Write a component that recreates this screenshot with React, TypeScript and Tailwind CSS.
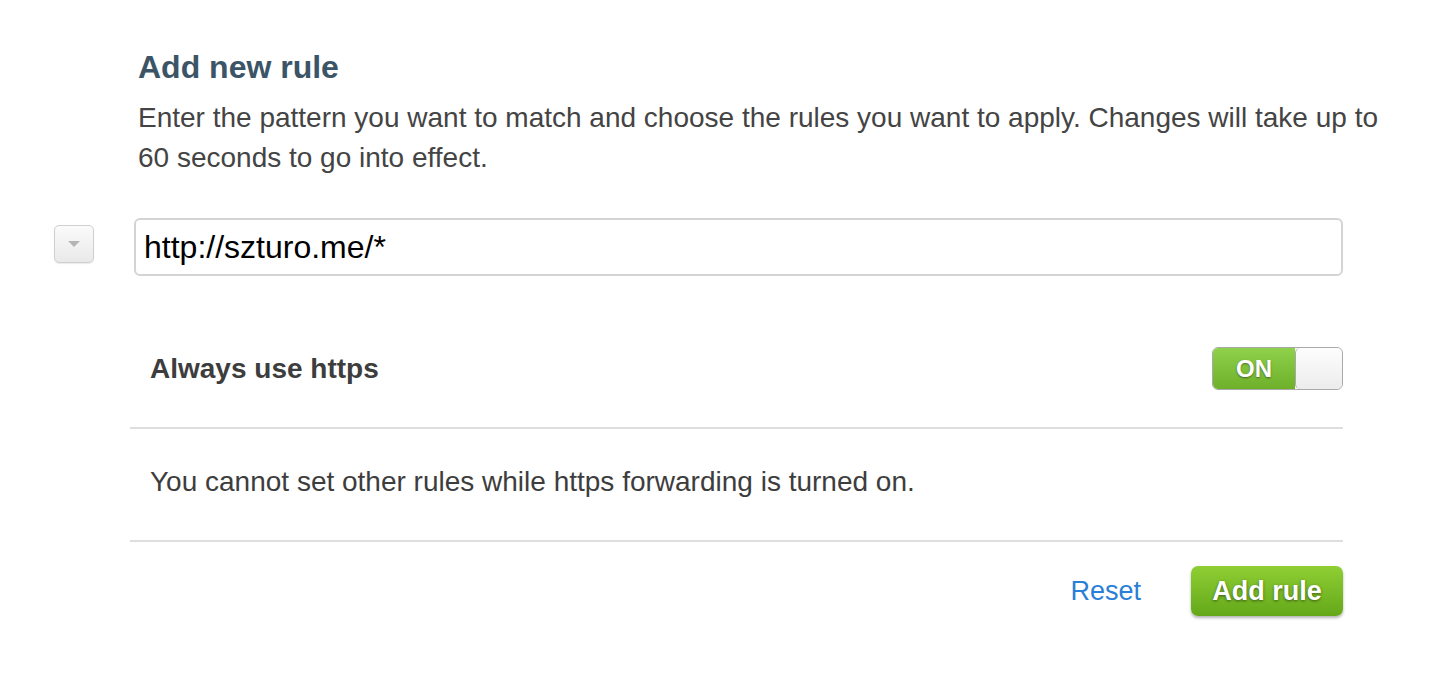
import { useState } from 'react';

function Toggle({ on, onChange }: { on: boolean; onChange: (v: boolean) => void }) {
  return (
    <button
      type="button"
      onClick={() => onChange(!on)}
      className="flex h-[43px] w-[131px] overflow-hidden rounded-[6px] border border-[#a9a9a9]"
    >
      <span className="flex h-full w-[82px] items-center justify-center bg-gradient-to-b from-[#8fd14a] to-[#6fb02a] text-[24px] font-bold text-white [text-shadow:0_1px_2px_rgba(0,0,0,0.45)]">
        {on ? 'ON' : 'OFF'}
      </span>
      <span className="h-full flex-1 rounded-[5px] border-l border-[#a9a9a9] bg-gradient-to-b from-[#fdfdfd] to-[#ececec]" />
    </button>
  );
}

export default function App() {
  const [pattern, setPattern] = useState('http://szturo.me/*');
  const [https, setHttps] = useState(true);

  return (
    <div className="min-h-[676px] w-[1448px] bg-white font-['Liberation_Sans',Arial,sans-serif] text-[#3d3d3d]">
      <div className="pl-[54px] pt-[49px]">
        <div className="ml-[84px] w-[1265px]">
          <h2 className="text-[32px] font-bold leading-[36px] text-[#3b5567]">Add new rule</h2>
          <p className="mt-[13px] text-[28px] leading-[40px] text-[#444]">
            Enter the pattern you want to match and choose the rules you want to apply. Changes will take up to 60 seconds to go into effect.
          </p>
        </div>

        {/* Pattern input */}
        <div className="mt-[40px] flex items-start">
          <button
            type="button"
            className="mt-[7px] flex h-[38px] w-[40px] items-center justify-center rounded-[5px] border border-[#cfcfcf] bg-gradient-to-b from-[#fbfbfb] to-[#e9e9e9] shadow-[0_1px_1px_rgba(0,0,0,0.08)]"
          >
            <svg width="14" height="8" viewBox="0 0 14 8">
              <path d="M1 1h12L7 7z" fill="#b5b5b5" />
            </svg>
          </button>
          <input
            value={pattern}
            onChange={e => setPattern(e.target.value)}
            className="ml-[40px] h-[58px] w-[1209px] rounded-[6px] border-2 border-[#d4d4d4] px-[8px] text-[32px] text-black outline-none"
          />
        </div>

        {/* Rules */}
        <div className="ml-[76px] mt-[71px] w-[1213px]">
          <div className="flex items-center justify-between pb-[37px] pl-[20px]">
            <span className="text-[28px] font-bold text-[#3d3d3d]">Always use https</span>
            <Toggle on={https} onChange={setHttps} />
          </div>
          <div className="border-t-2 border-[#dedede] pb-[38px] pl-[20px] pt-[33px] text-[28px] leading-[40px] text-[#3d3d3d]">
            You cannot set other rules while https forwarding is turned on.
          </div>
          <div className="flex items-center justify-end gap-[50px] border-t-2 border-[#dedede] pt-[24px]">
            <button type="button" className="text-[27px] text-[#2a7fd6]">Reset</button>
            <button
              type="button"
              className="h-[50px] w-[152px] rounded-[7px] bg-gradient-to-b from-[#8fcf34] to-[#64a819] text-[27px] font-bold text-white shadow-[0_2px_3px_rgba(0,0,0,0.3)] [text-shadow:0_1px_3px_rgba(0,0,0,0.5)]"
            >
              Add rule
            </button>
          </div>
        </div>
      </div>
    </div>
  );
}
